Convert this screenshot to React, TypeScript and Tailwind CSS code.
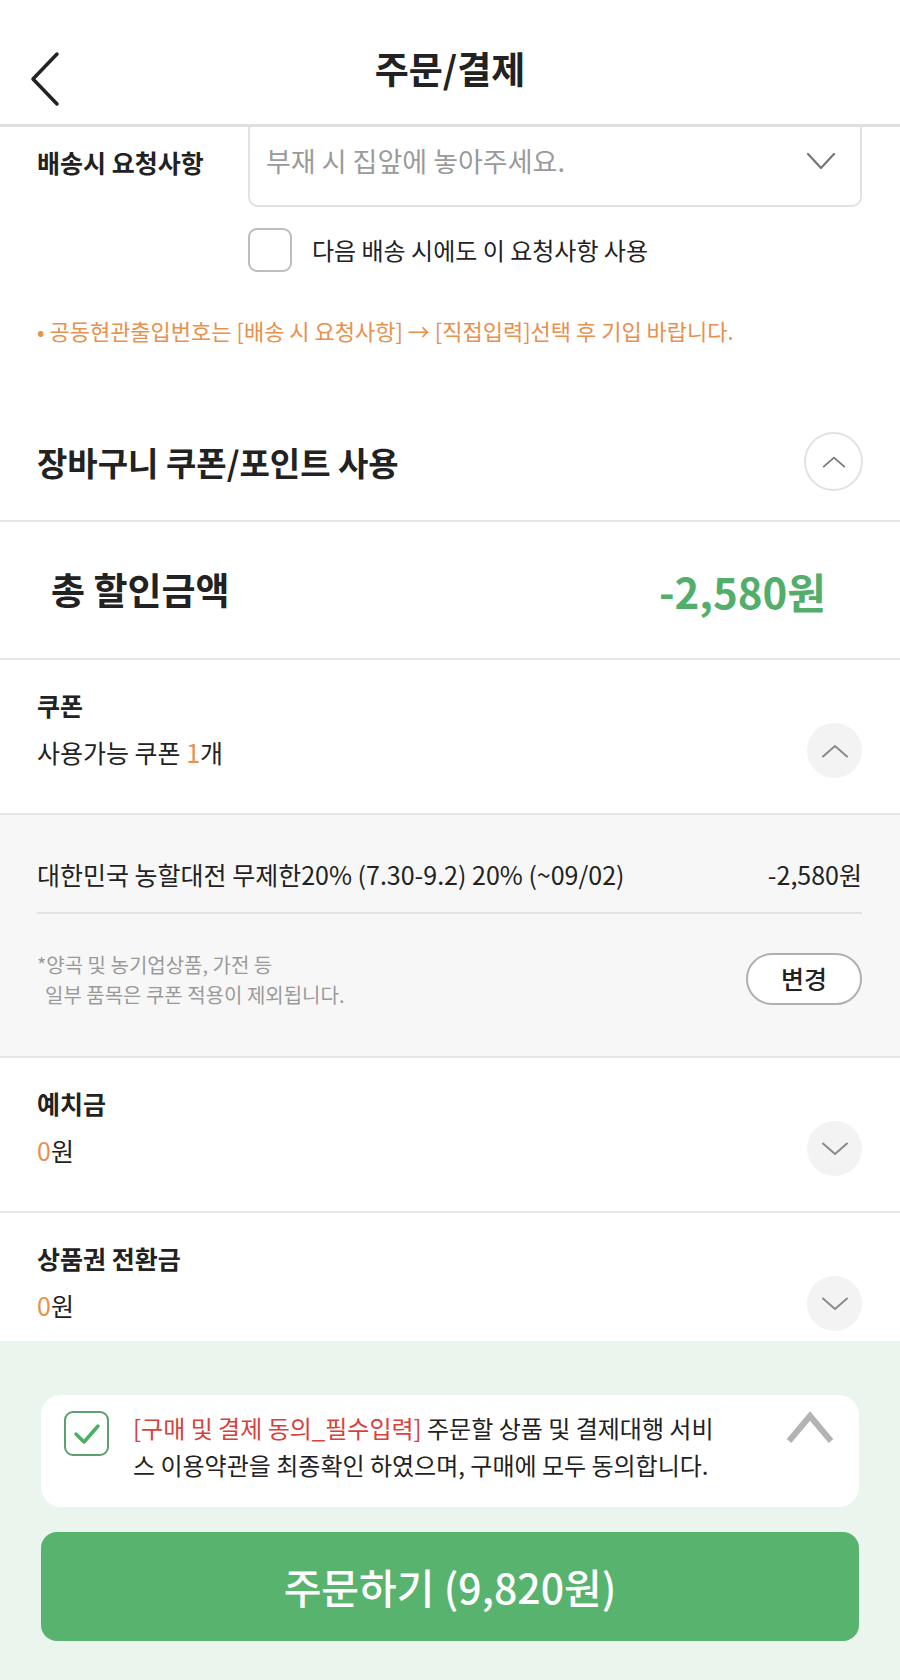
import React from "react"

const ChevronCircle = ({ up, outlined }: { up?: boolean; outlined?: boolean }) => (
  <div
    className={
      outlined
        ? "w-[59px] h-[59px] rounded-full border-2 border-[#e2e2e2] bg-white flex items-center justify-center shrink-0"
        : "w-[55px] h-[55px] rounded-full bg-[#f3f3f3] flex items-center justify-center shrink-0"
    }
  >
    <svg width={outlined ? 24 : 28} height="14" viewBox="0 0 28 14" fill="none">
      <path
        d={up ? "M2 12.5 L14 2 L26 12.5" : "M2 1.5 L14 12 L26 1.5"}
        stroke={outlined ? "#777" : "#8a8a8a"}
        strokeWidth="2"
        strokeLinecap="round"
        strokeLinejoin="round"
      />
    </svg>
  </div>
)

const PointRow = ({ label, children, last }: { label: string; children: React.ReactNode; last?: boolean }) => (
  <div className={`pl-[37px] pr-[38px] pt-[27px] ${last ? "pb-[10px]" : "pb-[35px] border-b-2 border-[#e6e6e6]"}`}>
    <div className="text-[25px] font-bold text-[#222] leading-[36px]">{label}</div>
    <div className="flex items-center justify-between">
      <div className="text-[25px] text-[#222] leading-[36px] pt-[3px]">{children}</div>
      <ChevronCircle up={label === "쿠폰"} />
    </div>
  </div>
)

export default function App() {
  return (
    <div className="w-[900px] min-h-[1680px] bg-white font-['Noto_Sans_CJK_KR','Noto_Sans',sans-serif] text-[#222] flex flex-col">
      {/* header */}
      <div className="h-[127px] border-b-[3px] border-[#e0e0e0] flex items-center shrink-0">
        <div className="pl-[28px] pt-[34px]">
          <svg width="34" height="56" viewBox="0 0 34 56" fill="none">
            <path d="M29 3 L5 28 L29 53" stroke="#222" strokeWidth="3.5" strokeLinecap="round" strokeLinejoin="round" />
          </svg>
        </div>
        <div className="flex-1 text-center text-[37px] font-bold pr-[62px] pt-[13px]">주문/결제</div>
      </div>

      {/* delivery request */}
      <div className="pl-[37px] pr-[38px]">
        <div className="flex">
          <div className="w-[211px] pt-[17px] text-[25px] font-bold leading-[36px]">배송시 요청사항</div>
          <div className="flex-1 h-[80px] border-2 border-t-0 border-[#e2e2e2] rounded-b-[10px] flex items-center justify-between pl-[16px] pr-[24px] pb-[10px]">
            <span className="text-[27px] text-[#9a9a9a]">부재 시 집앞에 놓아주세요.</span>
            <svg width="30" height="18" viewBox="0 0 30 18" fill="none">
              <path d="M2 2 L15 16 L28 2" stroke="#777" strokeWidth="2.2" strokeLinecap="round" strokeLinejoin="round" />
            </svg>
          </div>
        </div>
        <div className="flex items-center ml-[211px] mt-[21px] gap-[20px]">
          <div className="w-[44px] h-[44px] rounded-[9px] border-2 border-[#bdbdbd] bg-white" />
          <span className="text-[24px] text-[#222]">다음 배송 시에도 이 요청사항 사용</span>
        </div>
        <div className="mt-[43px] text-[22px] text-[#e8904c] leading-[30px]">
          • 공동현관출입번호는 [배송 시 요청사항] → [직접입력]선택 후 기입 바랍니다.
        </div>
      </div>

      {/* coupon / point heading */}
      <div className="flex items-center justify-between pl-[37px] pr-[37px] pt-[87px] pb-[29px] border-b-2 border-[#e6e6e6]">
        <div className="text-[33px] font-semibold leading-[44px]">장바구니 쿠폰/포인트 사용</div>
        <ChevronCircle up outlined />
      </div>

      {/* total discount */}
      <div className="h-[138px] flex items-center justify-between pl-[51px] pr-[74px] border-b-2 border-[#e6e6e6]">
        <div className="text-[37px] font-bold">총 할인금액</div>
        <div className="text-[42px] font-bold text-[#53ae6b]">-2,580원</div>
      </div>

      {/* coupon */}
      <PointRow label="쿠폰">
        사용가능 쿠폰 <span className="text-[#e8904c]">1</span>개
      </PointRow>

      <div className="bg-[#f7f7f7] pl-[37px] pr-[38px] border-b-2 border-[#e6e6e6]">
        <div className="flex justify-between items-center pt-[41px] pb-[20px] border-b-2 border-[#e2e2e2] text-[25px] leading-[36px]">
          <span>대한민국 농할대전 무제한20% (7.30-9.2) 20% (~09/02)</span>
          <span>-2,580원</span>
        </div>
        <div className="flex justify-between items-center pt-[36px] pb-[46px]">
          <div className="text-[20px] text-[#9a9a9a] leading-[30px]">
            <div>*양곡 및 농기업상품, 가전 등</div>
            <div className="pl-[8px]">일부 품목은 쿠폰 적용이 제외됩니다.</div>
          </div>
          <button className="w-[116px] h-[52px] mt-[-3px] rounded-full border-2 border-[#b0b0b0] bg-white text-[25px] font-medium text-[#222]">
            변경
          </button>
        </div>
      </div>

      <PointRow label="예치금">
        <span className="text-[#e8904c]">0</span>원
      </PointRow>
      <PointRow label="상품권 전환금" last>
        <span className="text-[#e8904c]">0</span>원
      </PointRow>

      {/* bottom bar */}
      <div className="flex-1 bg-[#eaf5ed] px-[41px] pt-[54px] pb-[41px]">
        <div className="bg-white rounded-[20px] flex items-start pl-[23px] pr-[24px] pt-[16px] pb-[24px]">
          <div className="w-[45px] h-[45px] rounded-[9px] border-2 border-[#5d9f6e] flex items-center justify-center shrink-0">
            <svg width="28" height="22" viewBox="0 0 28 22" fill="none">
              <path d="M3 11 L11 19 L25 3" stroke="#4caf65" strokeWidth="3.5" strokeLinecap="round" strokeLinejoin="round" />
            </svg>
          </div>
          <div className="flex-1 ml-[24px] mt-[-2px] text-[24px] leading-[37px] text-[#222]">
            <span className="text-[#d8413b]">[구매 및 결제 동의_필수입력]</span> 주문할 상품 및 결제대행 서비
            <br />
            스 이용약관을 최종확인 하였으며, 구매에 모두 동의합니다.
          </div>
          <svg width="50" height="34" viewBox="0 0 50 34" fill="none">
            <path d="M4 30 L25 5 L46 30" stroke="#b3b3b3" strokeWidth="6" strokeLinejoin="miter" />
          </svg>
        </div>
        <button className="mt-[25px] w-full h-[109px] rounded-[16px] bg-[#58b36e] text-white text-[41px] font-medium">
          주문하기 (9,820원)
        </button>
      </div>
    </div>
  )
}
